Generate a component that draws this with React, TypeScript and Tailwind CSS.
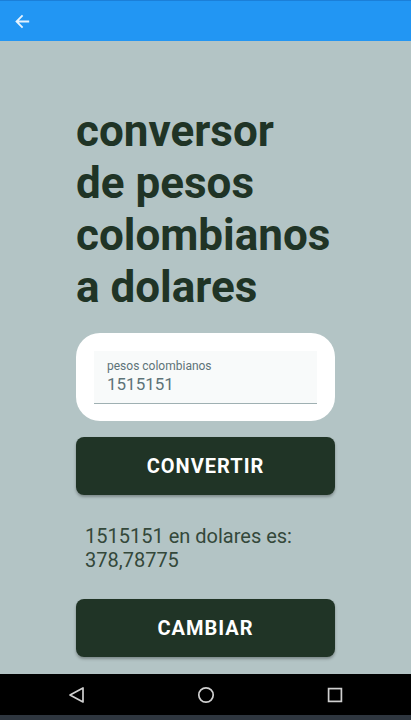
import { useState } from "react";

const RATE = 4000;

function Action({ children, onClick }: { children: string; onClick?: () => void }) {
  return (
    <button
      type="button"
      onClick={onClick}
      className="h-[58px] w-full rounded-lg bg-[#203426] text-xl font-bold tracking-wider text-white shadow-[0_2px_3px_rgba(0,0,0,0.3)]"
    >
      {children}
    </button>
  );
}

export default function App() {
  const [pesos, setPesos] = useState("1515151");
  const [converted, setConverted] = useState("1515151");
  const dollars = String(Number(converted) / RATE).replace(".", ",");

  return (
    <div className="flex min-h-screen flex-col bg-[#b3c4c5] font-['Roboto',sans-serif] text-[#203426]">
      <header className="flex h-[41px] items-center border-t border-[#1b7fd8] bg-[#2296f3] px-[15px]">
        <button type="button" aria-label="Volver" className="text-[#e6f3fe]">
          <svg viewBox="0 0 15 15" className="block size-[15px]" fill="none" stroke="currentColor" strokeWidth="1.8">
            <path d="M14.2 7.5H2M7.6 1.4L1.5 7.5L7.6 13.6" />
          </svg>
        </button>
      </header>

      <main className="grow px-[76px] pt-16 pb-4">
        <h1 className="text-[44px] leading-[52px] font-bold">
          conversor
          <br />
          de pesos
          <br />
          colombianos
          <br />a dolares
        </h1>

        <div className="mt-5 rounded-3xl bg-white px-[18px] pt-[18px] pb-[17px]">
          <div className="h-[53px] border-b border-[#9fb0b2] bg-[#f8fafa] px-[13px] pt-[7px] text-[#5d7378]">
            <label htmlFor="pesos" className="block text-xs leading-4">
              pesos colombianos
            </label>
            <input
              id="pesos"
              inputMode="numeric"
              value={pesos}
              onChange={(e) => setPesos(e.target.value)}
              className="block h-[22px] w-full bg-transparent text-[17px] outline-none"
            />
          </div>
        </div>

        <div className="mt-4">
          <Action onClick={() => setConverted(pesos)}>CONVERTIR</Action>
        </div>

        <p className="mt-[29px] mb-[27px] px-[9px] text-xl leading-6 text-[#34483a]">
          {converted} en dolares es: {dollars}
        </p>

        <Action>CAMBIAR</Action>
      </main>

      <nav className="flex h-[46px] items-center justify-between border-b-[5px] border-[#2e363f] bg-black px-[67px] text-[#d0d0d0]">
        <button type="button" aria-label="Atrás">
          <svg viewBox="0 0 18 18" className="block size-[18px]" fill="none" stroke="currentColor" strokeWidth="1.7" strokeLinejoin="round">
            <path d="M16 2V16L3 9Z" />
          </svg>
        </button>
        <button type="button" aria-label="Inicio">
          <svg viewBox="0 0 18 18" className="block size-[18px]" fill="none" stroke="currentColor" strokeWidth="1.7">
            <circle cx="9" cy="9" r="7.2" />
          </svg>
        </button>
        <button type="button" aria-label="Recientes">
          <svg viewBox="0 0 18 18" className="block size-[18px]" fill="none" stroke="currentColor" strokeWidth="1.7">
            <rect x="2.6" y="2.6" width="12.8" height="12.8" />
          </svg>
        </button>
      </nav>
    </div>
  );
}
